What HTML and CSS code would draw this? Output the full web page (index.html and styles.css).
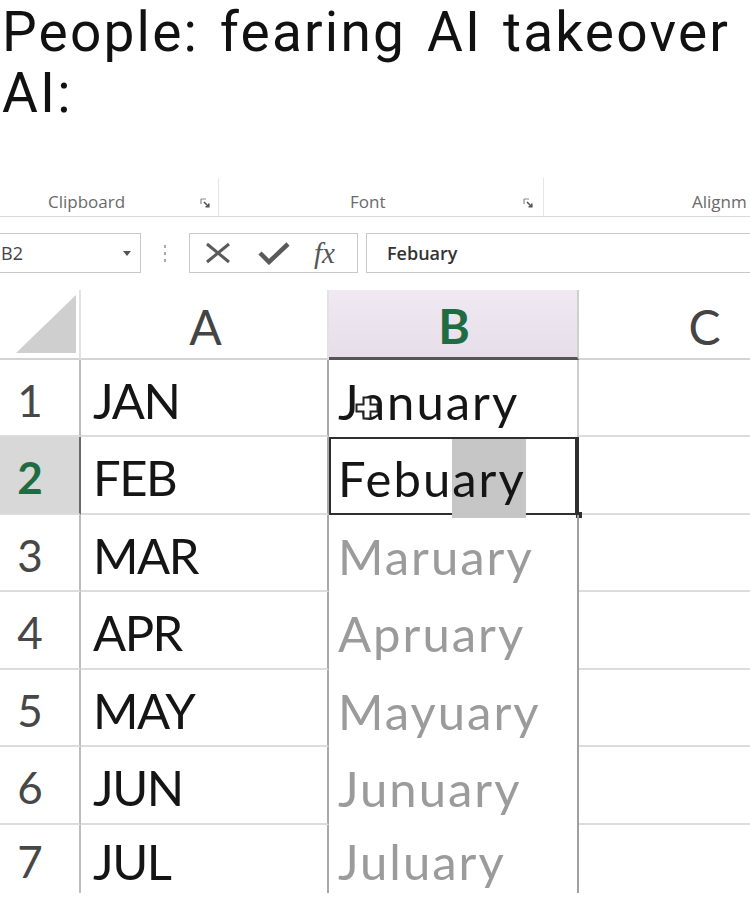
FILE: index.html
```html
<!DOCTYPE html>
<html>
<head>
<meta charset="utf-8">
<link rel="stylesheet" href="styles.css">
</head>
<body>
<div class="page">
  <div class="caption">People: fearing AI takeover<br>AI:</div>

  <div class="ribbon">
    <div class="group g-clip">
      <span class="glabel">Clipboard</span>
      <svg class="launcher" width="10" height="10" viewBox="0 0 10 10"><path d="M1 1H6M1 1V6" stroke="#8a8a8a" stroke-width="1.2" fill="none"/><path d="M4 4L8.5 8.5M5.5 8.8H8.8V5.5" stroke="#555" stroke-width="1.6" fill="none"/></svg>
    </div>
    <div class="group g-font">
      <span class="glabel">Font</span>
      <svg class="launcher" width="10" height="10" viewBox="0 0 10 10"><path d="M1 1H6M1 1V6" stroke="#8a8a8a" stroke-width="1.2" fill="none"/><path d="M4 4L8.5 8.5M5.5 8.8H8.8V5.5" stroke="#555" stroke-width="1.6" fill="none"/></svg>
    </div>
    <div class="group g-align">
      <span class="glabel">Alignm</span>
    </div>
  </div>

  <div class="fbar">
    <div class="namebox">
      <span class="nbtext">B2</span>
      <svg class="nbarrow" width="8" height="5" viewBox="0 0 8 5"><path d="M0 0H8L4 5Z" fill="#555"/></svg>
    </div>
    <div class="dots"><i></i><i></i><i></i></div>
    <div class="fxbox">
      <svg width="28" height="22" viewBox="0 0 28 22"><path d="M3 2L25 20M25 2L3 20" stroke="#5a5a5a" stroke-width="3" fill="none"/></svg>
      <svg width="32" height="24" viewBox="0 0 32 24"><path d="M2 12L11 21L30 3" stroke="#5a5a5a" stroke-width="4.5" fill="none"/></svg>
      <span class="fx">fx</span>
    </div>
    <div class="finput">Febuary</div>
  </div>

  <div class="sheet">
    <div class="corner"><svg width="60" height="58" viewBox="0 0 60 58"><path d="M60 0V58H0Z" fill="#cfcfcf"/></svg></div>
    <div class="ch ch-a">A</div>
    <div class="ch ch-b">B</div>
    <div class="ch ch-c">C</div>

    <div class="rh">1</div>
    <div class="cell ca">JAN</div>
    <div class="cell cb b1">J<span class="ja">a</span>nuary<svg class="cursor" width="24" height="24" viewBox="0 0 24 24"><path d="M8.5 1.5H15.5V8.5H22.5V15.5H15.5V22.5H8.5V15.5H1.5V8.5H8.5Z" fill="#fff" stroke="#222" stroke-width="2"/></svg></div>
    <div class="cell cc"></div>

    <div class="rh rh-sel">2</div>
    <div class="cell ca">FEB</div>
    <div class="cell cb b2">Febu<span class="auto">ary</span></div>
    <div class="cell cc"></div>

    <div class="rh">3</div>
    <div class="cell ca">MAR</div>
    <div class="cell cb ghost">Maruary</div>
    <div class="cell cc"></div>

    <div class="rh">4</div>
    <div class="cell ca">APR</div>
    <div class="cell cb ghost">Apruary</div>
    <div class="cell cc"></div>

    <div class="rh">5</div>
    <div class="cell ca">MAY</div>
    <div class="cell cb ghost">Mayuary</div>
    <div class="cell cc"></div>

    <div class="rh">6</div>
    <div class="cell ca">JUN</div>
    <div class="cell cb ghost">Junuary</div>
    <div class="cell cc"></div>

    <div class="rh last">7</div>
    <div class="cell ca last">JUL</div>
    <div class="cell cb ghost last">Juluary</div>
    <div class="cell cc last"></div>
  </div>
</div>
</body>
</html>
```

FILE: styles.css
```css
html, body {
  margin: 0;
  padding: 0;
  background: #fff;
}
.page {
  width: 750px;
  height: 904px;
  overflow: hidden;
  background: #fff;
}
.caption {
  font-family: Roboto, "Liberation Sans", sans-serif;
  font-size: 55px;
  line-height: 61px;
  color: #111;
  white-space: nowrap;
  letter-spacing: 2.2px;
  word-spacing: 5px;
  padding-left: 2px;
  padding-top: 2px;
}

/* ribbon */
.ribbon {
  display: flex;
  margin-top: 54px;
  height: 38px;
  border-bottom: 1px solid #dadada;
  white-space: nowrap;
}
.group {
  display: flex;
  align-items: flex-end;
  padding-bottom: 5px;
  box-sizing: border-box;
  height: 38px;
  border-right: 1px solid #e6e6e6;
}
.glabel {
  font-family: "Open Sans", "Liberation Sans", sans-serif;
  font-size: 17px;
  line-height: 18px;
  color: #6a6a6a;
}
.launcher {
  margin-left: auto;
  margin-bottom: 3px;
}
.g-clip { width: 219px; padding-left: 48px; padding-right: 8px; }
.g-font { width: 325px; padding-left: 131px; padding-right: 10px; }
.g-align { flex: 1; padding-left: 148px; border-right: 0; }

/* formula bar */
.fbar {
  display: flex;
  margin-top: 16px;
  height: 40px;
}
.namebox {
  width: 141px;
  box-sizing: border-box;
  border: 1px solid #c9c9c9;
  border-left: 0;
  display: flex;
  align-items: center;
  padding-left: 1px;
  padding-right: 9px;
}
.nbtext {
  font-family: "Open Sans", "Liberation Sans", sans-serif;
  font-size: 18px;
  color: #444;
}
.nbarrow { margin-left: auto; }
.dots {
  width: 48px;
  display: flex;
  flex-direction: column;
  align-items: center;
  justify-content: center;
  gap: 4px;
}
.dots i {
  display: block;
  width: 2px;
  height: 3px;
  background: #a8a8a8;
}
.fxbox {
  width: 169px;
  box-sizing: border-box;
  border: 1px solid #c9c9c9;
  display: flex;
  align-items: center;
  padding-left: 14px;
  gap: 26px;
}
.fx {
  font-family: "Liberation Serif", serif;
  font-style: italic;
  font-size: 29px;
  color: #555;
  line-height: 1;
  margin-left: -2px;
}
.finput {
  flex: 1;
  margin-left: 8px;
  border: 1px solid #c9c9c9;
  border-right: 0;
  font-family: "Open Sans", "Liberation Sans", sans-serif;
  font-size: 18px;
  font-weight: 600;
  color: #333;
  line-height: 38px;
  padding-left: 20px;
}

/* sheet */
.sheet {
  margin-top: 17px;
  margin-left: -19px;
  display: grid;
  grid-template-columns: 100px 248px 250px 171px;
  grid-template-rows: 70px 77px 78px 77px 78px 77px 78px 68px;
  font-family: Lato, "Liberation Sans", sans-serif;
}
.corner {
  display: flex;
  align-items: flex-end;
  justify-content: flex-end;
  padding: 0 3px 5px 0;
  border-bottom: 2px solid #d3d3d3;
  border-right: 2px solid #e2e2e2;
}
.ch {
  display: flex;
  align-items: center;
  justify-content: center;
  font-size: 48px;
  color: #444;
  border-bottom: 2px solid #d3d3d3;
  padding-top: 4px;
}
.ch-a { border-right: 2px solid #e2e2e2; padding-left: 3px; }
.ch-b {
  background: linear-gradient(#f0e8f2, #e6dee9);
  color: #1f6b42;
  font-weight: 700;
  border-bottom: 3px solid #555;
  border-right: 2px solid #cfcfcf;
  padding-left: 2px;
}
.ch-c { padding-left: 80px; }

.rh {
  display: flex;
  align-items: center;
  justify-content: center;
  font-size: 44px;
  color: #474747;
  border-right: 2px solid #bdbdbd;
  border-bottom: 2px solid #dcdcdc;
  padding-top: 4px;
}
.rh-sel {
  background: #d8d8d8;
  color: #1f6b42;
  font-weight: 700;
  border-right: 2px solid #6a6a6a;
}
.cell {
  display: flex;
  align-items: center;
  font-size: 49px;
  color: #151515;
  border-bottom: 2px solid #dcdcdc;
  padding-top: 4px;
  white-space: nowrap;
}
.ca {
  padding-left: 12px;
  letter-spacing: -1.5px;
  border-right: 2px solid #a9a9a9;
}
.cb {
  padding-left: 9px;
  letter-spacing: 2px;
  border-right: 2px solid #cfcfcf;
  position: relative;
}
.b1 { border-bottom: 0; }
.ja { color: #151515; }
.cursor {
  position: absolute;
  left: 26px;
  top: 36px;
}
.b2 {
  box-shadow: inset 0 0 0 2px #2f2f2f;
  border-bottom: 0;
  border-right: 2px solid #2f2f2f;
}
.b2::after {
  content: "";
  position: absolute;
  right: -5px;
  bottom: -3px;
  width: 6px;
  height: 6px;
  background: #2f2f2f;
}
.auto {
  background: #c6c6c6;
  padding: 10px 0 11px 0;
}
.ghost {
  color: #9b9b9b;
  border-bottom: 0;
  border-right: 2px solid #a0a0a0;
}
.cc { border-right: 0; }
.last { border-bottom: 0; }
```
